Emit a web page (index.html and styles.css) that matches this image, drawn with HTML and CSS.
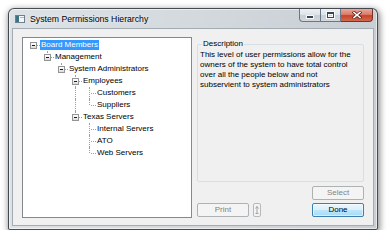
FILE: index.html
```html
<!DOCTYPE html>
<html>
<head>
<meta charset="utf-8">
<title>System Permissions Hierarchy</title>
<link rel="stylesheet" href="styles.css">
</head>
<body>
<div class="window">
  <div class="titlebar">
    <svg class="app-icon" width="10" height="8" viewBox="0 0 10 8">
      <rect x="0.5" y="0.5" width="9" height="7" fill="#f4f7fa" stroke="#6f7f8c"/>
      <rect x="1" y="1" width="3" height="6" fill="#3d7483"/>
      <rect x="5" y="2" width="4" height="1" fill="#9cc1d9"/>
    </svg>
    <span class="title">System Permissions Hierarchy</span>
    <div class="caption">
      <div class="cbtn min"><span class="g-min"></span></div>
      <div class="cbtn max"><span class="g-max"></span></div>
      <div class="cbtn close">
        <svg width="10" height="8" viewBox="0 0 10 8">
          <path d="M2 1.5 L8 6.5 M8 1.5 L2 6.5" stroke="#5a1f14" stroke-width="3" stroke-linecap="square"/>
          <path d="M2 1.5 L8 6.5 M8 1.5 L2 6.5" stroke="#ffffff" stroke-width="1.6" stroke-linecap="square"/>
        </svg>
      </div>
    </div>
  </div>
  <div class="client">
    <div class="tree">
      <div class="node"><i class="col root"><b class="box"></b></i><span class="lbl sel">Board Members</span></div>
      <div class="node"><i class="col"></i><i class="col elbow"><b class="box"></b></i><span class="lbl">Management</span></div>
      <div class="node"><i class="col"></i><i class="col"></i><i class="col elbow"><b class="box"></b></i><span class="lbl">System Administrators</span></div>
      <div class="node"><i class="col"></i><i class="col"></i><i class="col"></i><i class="col tee"><b class="box"></b></i><span class="lbl">Employees</span></div>
      <div class="node"><i class="col"></i><i class="col"></i><i class="col"></i><i class="col v"></i><i class="col tee"></i><span class="lbl">Customers</span></div>
      <div class="node"><i class="col"></i><i class="col"></i><i class="col"></i><i class="col v"></i><i class="col elbow"></i><span class="lbl">Suppliers</span></div>
      <div class="node"><i class="col"></i><i class="col"></i><i class="col"></i><i class="col elbow"><b class="box"></b></i><span class="lbl">Texas Servers</span></div>
      <div class="node"><i class="col"></i><i class="col"></i><i class="col"></i><i class="col"></i><i class="col tee"></i><span class="lbl">Internal Servers</span></div>
      <div class="node"><i class="col"></i><i class="col"></i><i class="col"></i><i class="col"></i><i class="col tee"></i><span class="lbl">ATO</span></div>
      <div class="node"><i class="col"></i><i class="col"></i><i class="col"></i><i class="col"></i><i class="col elbow"></i><span class="lbl">Web Servers</span></div>
    </div>
    <div class="side">
      <fieldset class="group">
        <legend>Description</legend>
        <p class="desc">This level of user permissions allow for the owners of the system to have total control over all the people below and not subservient to system administrators</p>
      </fieldset>
      <div class="row row-select">
        <button class="btn" disabled>Select</button>
      </div>
      <div class="row row-bottom">
        <button class="btn" disabled>Print</button>
        <button class="mini" disabled>
          <svg width="4" height="10" viewBox="0 0 4 10">
            <path d="M2 1.5 V8.5 M0.5 3.5 L2 1.5 L3.5 3.5 M0.5 8.5 H3.5" stroke="#a3a3a3" stroke-width="1" fill="none"/>
          </svg>
        </button>
        <span class="spacer"></span>
        <button class="btn default">Done</button>
      </div>
    </div>
  </div>
</div>
</body>
</html>
```

FILE: styles.css
```css
html, body {
  margin: 0;
  padding: 0;
  background: #ffffff;
}

body {
  font-family: "Liberation Sans", Arial, sans-serif;
  padding: 8px 0 0 8px;
}

.window {
  box-sizing: border-box;
  width: 370px;
  height: 222px;
  border: 1px solid rgba(30, 35, 40, 0.78);
  border-radius: 6px 6px 2px 2px;
  background: linear-gradient(to right, #dde2e7 0%, #d3d8dd 55%, #c8ced4 100%);
  box-shadow: 1px 2px 6px 1px rgba(0, 0, 0, 0.45), inset 0 0 0 1px rgba(255, 255, 255, 0.55);
  padding: 0 4px 4px 4px;
  display: flex;
  flex-direction: column;
}

.titlebar {
  height: 20px;
  display: flex;
  align-items: flex-start;
  flex: none;
}

.app-icon {
  margin: 6px 0 0 2px;
  flex: none;
}

.title {
  font-size: 8.7px;
  line-height: 10px;
  margin: 5px 0 0 5px;
  color: #000;
  text-shadow: 0 0 4px rgba(255, 255, 255, 0.9);
}

.caption {
  margin-left: auto;
  display: flex;
  height: 13px;
  flex: none;
}

.cbtn {
  box-sizing: border-box;
  height: 13px;
  border: 1px solid #6a7886;
  border-top: none;
  display: flex;
  align-items: center;
  justify-content: center;
}

.cbtn.min {
  width: 22px;
  border-radius: 0 0 0 4px;
  background: linear-gradient(#eef1f4 0%, #dfe4e9 45%, #c7ced5 55%, #d3d9df 100%);
}

.cbtn.max {
  width: 20px;
  border-left: none;
  background: linear-gradient(#eef1f4 0%, #dfe4e9 45%, #c7ced5 55%, #d3d9df 100%);
}

.cbtn.close {
  width: 32px;
  border-left: none;
  border-color: #7a3225;
  border-radius: 0 0 4px 0;
  background: linear-gradient(#e9a89b 0%, #dc7d6b 45%, #c8432b 55%, #d06a4f 100%);
}

.g-min {
  width: 6px;
  height: 2px;
  background: #3b4652;
  box-shadow: 0 0 0 1px #f6f8fa;
  margin-top: 4px;
}

.g-max {
  box-sizing: border-box;
  width: 7px;
  height: 6px;
  border: 1px solid #3b4652;
  border-top-width: 2px;
  box-shadow: 0 0 0 1px #f6f8fa, inset 0 0 0 1px #f6f8fa;
}

.client {
  flex: 1;
  background: #f0f0f0;
  box-shadow: 0 0 0 1px #a3abb3;
  display: flex;
  padding: 8px 8px 7px 9px;
  min-height: 0;
}

.tree {
  box-sizing: border-box;
  width: 170px;
  flex: none;
  background: #ffffff;
  border: 1px solid #828790;
  padding: 1px 0 0 3px;
  font-size: 8px;
}

.node {
  display: flex;
  align-items: center;
  height: 12px;
}

.col {
  display: block;
  position: relative;
  width: 14px;
  height: 12px;
  flex: none;
}

.col.v::before,
.col.tee::before {
  content: "";
  position: absolute;
  left: 7px;
  top: 0;
  bottom: 0;
  border-left: 1px dotted #a0a0a0;
}

.col.elbow::before {
  content: "";
  position: absolute;
  left: 7px;
  top: 0;
  height: 6px;
  border-left: 1px dotted #a0a0a0;
}

.col.tee::after,
.col.elbow::after,
.col.root::after {
  content: "";
  position: absolute;
  left: 9px;
  right: 0;
  top: 6px;
  border-top: 1px dotted #a0a0a0;
}

.box {
  position: absolute;
  z-index: 1;
  left: 4px;
  top: 3px;
  width: 7px;
  height: 7px;
  box-sizing: border-box;
  border: 1px solid #949494;
  background: linear-gradient(#ffffff, #dcdcdc);
}

.box::after {
  content: "";
  position: absolute;
  left: 1px;
  top: 2px;
  width: 3px;
  height: 1px;
  background: #1a1a1a;
}

.lbl {
  display: block;
  height: 10px;
  line-height: 10px;
  padding: 0 1px;
  color: #000;
  white-space: nowrap;
}

.lbl.sel {
  background: #3399ff;
  color: #ffffff;
}

.side {
  flex: 1;
  margin-left: 5px;
  display: flex;
  flex-direction: column;
  padding-right: 1px;
}

.group {
  flex: 1;
  margin: 2px 0 0 0;
  padding: 0 2px;
  border: 1px solid #d5dfe5;
  border-radius: 2px;
  font-size: 8px;
  min-height: 0;
}

.group legend {
  padding: 0 1px;
  margin-left: 2px;
  line-height: 10px;
  color: #000;
}

.desc {
  width: 156px;
  margin: 1px 0 0 0;
  line-height: 10px;
  color: #000;
}

.row {
  display: flex;
  flex: none;
}

.row-select {
  justify-content: flex-end;
  margin-top: 4px;
}

.row-bottom {
  margin-top: 3px;
  margin-bottom: 1px;
  align-items: center;
}

.spacer {
  flex: 1;
}

.btn {
  box-sizing: border-box;
  width: 52px;
  height: 14px;
  padding: 0;
  font-family: "Liberation Sans", Arial, sans-serif;
  font-size: 8px;
  line-height: 12px;
  border: 1px solid #adb2b5;
  border-radius: 2px;
  background: #f4f4f4;
  color: #838383;
}

.btn.default {
  border-color: #3c7fb1;
  color: #000;
  background: linear-gradient(#eaf6fd 0%, #d9f0fc 48%, #bee6fd 52%, #a7d9f5 100%);
  box-shadow: inset 0 0 0 1px rgba(255, 255, 255, 0.55);
}

.mini {
  box-sizing: border-box;
  width: 8px;
  height: 14px;
  margin-left: 4px;
  padding: 0;
  border: 1px solid #b5b9bc;
  border-radius: 2px;
  background: #f4f4f4;
  display: flex;
  align-items: center;
  justify-content: center;
}
```
